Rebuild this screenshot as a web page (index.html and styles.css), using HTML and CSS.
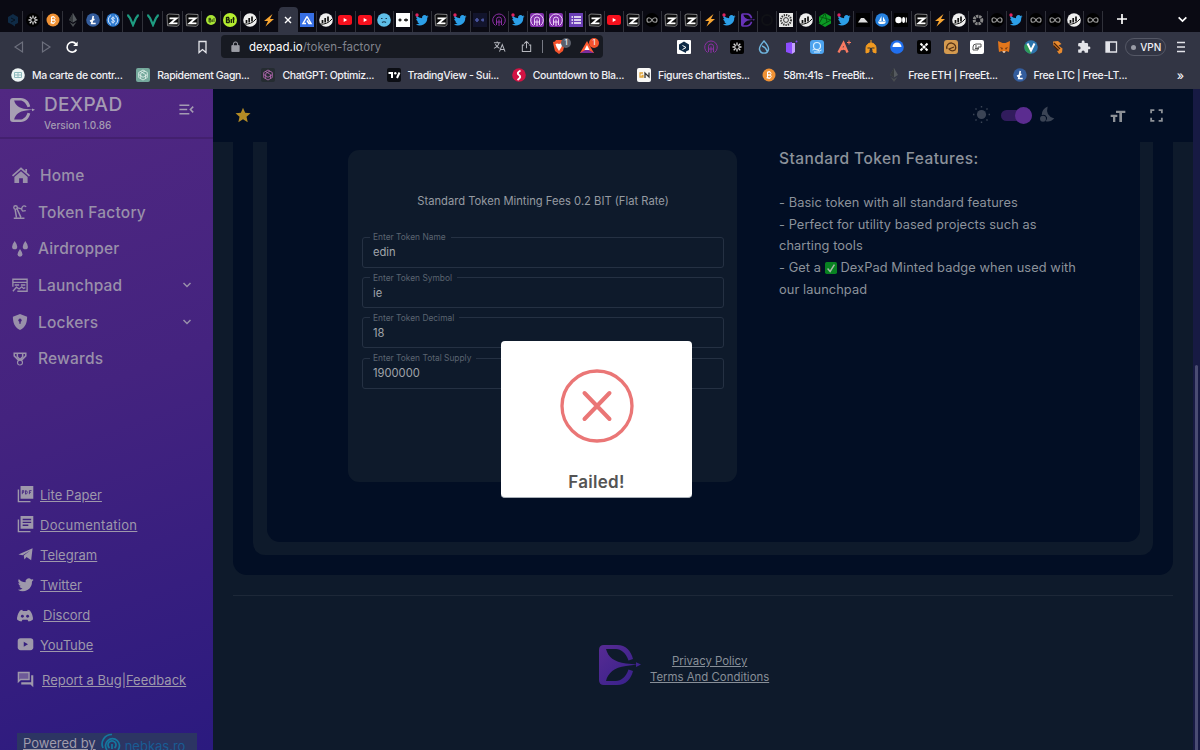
FILE: index.html
```html
<!DOCTYPE html>
<html lang="en">
<head>
  <meta charset="UTF-8">
  <meta name="viewport" content="width=device-width, initial-scale=1">
  <title>DEXPAD - Token Factory</title>
  <link rel="stylesheet" href="styles.css">
</head>
<body>

<!-- icon sprite -->
<svg class="sprite">
  <defs>
    <linearGradient id="g-logo" x1="0" y1="0" x2="1" y2="1">
      <stop offset="0" stop-color="#572b93"/><stop offset="1" stop-color="#35208a"/>
    </linearGradient>
  </defs>
  <symbol id="hex" viewBox="0 0 14 14"><path d="M7 1l5 3v6l-3 1.500v2l-3-2-4-2V4z" fill="#0f2b46"/><path d="M5 5l4 2-4 2" fill="none" stroke="#07121f"/></symbol>
  <symbol id="flake" viewBox="0 0 14 14"><circle cx="7" cy="7" r="7" fill="#000"/><path d="M7 2.500v3M7 8.500v3M2.500 7h3M8.500 7h3M3.700 3.700l2 2M8.300 8.300l2 2M3.700 10.300l2-2M8.300 5.700l2-2" stroke="#ddd" stroke-width="1.300"/></symbol>
  <symbol id="btc" viewBox="0 0 14 14"><circle cx="7" cy="7" r="6.500" fill="#f09235"/><path d="M5.500 4v6M5.500 4.200h2.200q1.500.1 1.300 1.400T7.500 7H5.500h2.300q1.600.2 1.400 1.500T7.700 9.800H4.500M6.200 3v1M7.700 3v1M6.200 10v1M7.700 10v1" fill="none" stroke="#fff"/></symbol>
  <symbol id="eth" viewBox="0 0 14 14"><path d="M7 0l4 7-4 2.500L3 7z" fill="#555a5e"/><path d="M7 0v9.500L3 7z" fill="#35393d"/><path d="M3.500 9L7 11l3.500-2L7 14z" fill="#484c50"/></symbol>
  <symbol id="ltc" viewBox="0 0 14 14"><circle cx="7" cy="7" r="6.800" fill="#345d9d"/><path d="M7.300 3L5.700 10.500h4M4 8.300l4.500-2" fill="none" stroke="#fff" stroke-width="1.600"/></symbol>
  <symbol id="usd" viewBox="0 0 14 14"><circle cx="7" cy="7" r="6.700" fill="#2f7bd0"/><path d="M5 2.500a5 5 0 0 0 0 9M9 2.500a5 5 0 0 1 0 9M8.800 5.500Q7 3.800 5.600 5.200 5.300 6.500 7 7t1.600 1.600Q7.500 10.300 5.200 8.700M7 3.500v7" fill="none" stroke="#d4e7ff"/></symbol>
  <symbol id="vee" viewBox="0 0 14 14"><path d="M2 1.500c0 2 1 2 2 3.500l3 7 3-7c1-1.500 2-1.500 2-3.500" fill="none" stroke="#1e9c81" stroke-width="2.200"/></symbol>
  <symbol id="zee" viewBox="0 0 14 14"><path d="M1 2l2-1 10 .5V12l-2 1.300-9.500-.6z" fill="#0c0c0d" stroke="#aaa" stroke-width=".7"/><path d="M3.500 5.300h7L4.500 10.300h7" fill="none" stroke="#fff" stroke-width="1.800"/></symbol>
  <symbol id="bitS" viewBox="0 0 14 14"><circle cx="7" cy="7" r="5" fill="#a9e534"/><path d="M5 5v4M5 5.300h1.500v1.500H5h2V9H5M8.300 6.300V9M10 5v4" fill="none" stroke="#263510" stroke-width=".8"/></symbol>
  <symbol id="bitL" viewBox="0 0 14 14"><circle cx="7" cy="7" r="7" fill="#b5ee2f"/><path d="M3.500 4v6M3.500 4.500h2q1 1.200 0 2.300h-2 2.500q1 1.500 0 2.700H3.500M8.300 6v4M10.500 4v6M9.500 6h2" fill="none" stroke="#17200a" stroke-width="1.300"/></symbol>
  <symbol id="mm" viewBox="0 0 14 14"><circle cx="7" cy="7" r="6.800" fill="#eee"/><path d="M3.500 10V7M6.200 9.500V5M9 8.500V3.500" stroke="#111" stroke-width="1.700"/><path d="M1 11q7 1 12-5" fill="none" stroke="#111"/></symbol>
  <symbol id="bolt" viewBox="0 0 14 14"><path d="M10.500 1L2 8h4l-2.500 5.500L12 6H8z" fill="#f7a531"/></symbol>
  <symbol id="tri" viewBox="0 0 14 14"><path d="M0 0h14v14H0z" fill="#376fe4"/><path d="M7 3.500L3 10.500h3M7 3.500l4 7H8.500M7 7.500l2 3" fill="none" stroke="#fff" stroke-width="1.500"/></symbol>
  <symbol id="yt" viewBox="0 0 14 14"><rect y="2" width="14" height="10" rx="2.500" fill="#f5101d"/><path d="M5.700 5v4l3.500-2z" fill="#fff"/></symbol>
  <symbol id="face" viewBox="0 0 14 14"><circle cx="7" cy="7" r="6.800" fill="#5fbfe8"/><path d="M4 5.500h1.500M8.500 5.500H10M5 9.500q2-1.500 4 0" stroke="#1a3b52" stroke-width="1.200" fill="none"/></symbol>
  <symbol id="dots" viewBox="0 0 14 14"><path d="M0 0h14v14H0z" fill="#fff"/><path d="M2.500 7h3M8 7h4M4 5.500v3M10 5.500v3" stroke="#111" stroke-width="1.300"/></symbol>
  <symbol id="dots2" viewBox="0 0 14 14"><path d="M0 0h14v14H0z" fill="#12142c"/><path d="M2 7h4M8 7h3M4 5v4M10 5.500v3" stroke="#4a55a0" stroke-width="1.700"/></symbol>
  <symbol id="bird" viewBox="0 0 24 24"><path fill="currentColor" d="M22.500 6c-.8.300-1.600.6-2.400.7.900-.5 1.500-1.300 1.800-2.300-.8.500-1.700.8-2.600 1a4.200 4.200 0 0 0-7.200 3.800A11.900 11.900 0 0 1 3.400 4.800a4.200 4.200 0 0 0 1.300 5.600c-.7 0-1.300-.2-1.900-.5 0 2 1.400 3.800 3.400 4.200-.6.200-1.300.2-1.900.1.500 1.700 2.100 2.900 3.900 2.900A8.400 8.400 0 0 1 2 18.800a11.900 11.900 0 0 0 18.400-10.600c.8-.6 1.500-1.300 2.100-2.200z"/></symbol>
  <symbol id="tw" viewBox="0 0 14 14"><svg x="-.5" y="-.5" width="15" height="15" viewBox="0 0 24 24" color="#2c9fe8"><use href="#bird"/></svg><circle cx="2" cy="2" r="1.700" fill="#e0245e"/></symbol>
  <symbol id="arch" viewBox="0 0 14 14"><path d="M3.500 12.500A6.300 6.300 0 1 1 10.500 12.500M4.500 12V6.500a2.500 2.500 0 0 1 5 0V12M7 6.500V13M4.500 9h5" fill="none" stroke="currentColor" stroke-width="1"/></symbol>
  <symbol id="list" viewBox="0 0 14 14"><path d="M0 0h14v14H0z" fill="#6a3fb5"/><path d="M2.500 4h1.500M5 4h7M2.500 7h1.500M5 7h7M2.500 10h1.500M5 10h7" stroke="#fff" stroke-width="1.500"/></symbol>
  <symbol id="inf" viewBox="0 0 14 14"><circle cx="7" cy="7" r="7" fill="#000"/><path d="M7 7C5.500 4 2 4 2 7S5.500 10 7 7s5-3 5 0S8.500 10 7 7z" fill="none" stroke="#999" stroke-width="1.200"/></symbol>
  <symbol id="ring" viewBox="0 0 14 14"><circle cx="7" cy="7" r="5" fill="none" stroke="#101116" stroke-width="2"/></symbol>
  <symbol id="mandala" viewBox="0 0 14 14"><path d="M0 0h14v14H0z" fill="#e8e8e8"/><circle cx="7" cy="7" r="5" fill="none" stroke="#333" stroke-width="2" stroke-dasharray="1.300 1"/><circle cx="7" cy="7" r="2.400" fill="none" stroke="#333"/></symbol>
  <symbol id="gear" viewBox="0 0 14 14"><circle cx="7" cy="7" r="3.800" fill="none" stroke="#888" stroke-width="3" stroke-dasharray="2.300 .8"/></symbol>
  <symbol id="cube" viewBox="0 0 14 14"><path d="M7 0l6 3.500v7L7 14l-6-3.500v-7z" fill="#0b9b24"/><path d="M1 3.500L13 7 4 12M1 10.500L7 0l2 9" fill="none" stroke="#04560f"/></symbol>
  <symbol id="hill" viewBox="0 0 14 14"><path d="M0 0h14v14H0z" fill="#000"/><path d="M2 9.500L5 5h3l4 4.500z" fill="#ddd"/></symbol>
  <symbol id="sea" viewBox="0 0 14 14"><circle cx="7" cy="7" r="6.800" fill="#2681df"/><path d="M3 8.500h8Q10.500 11 8 11H5Q3 10.500 3 8.500zM6.500 3v5H4zM8 3.500L10.500 8H8z" fill="#fff"/></symbol>
  <symbol id="med" viewBox="0 0 14 14"><path d="M0 0h14v14H0z" fill="#000"/><circle cx="4.500" cy="7" r="3.200" fill="#fff"/><ellipse cx="9.600" cy="7" rx="1.500" ry="3" fill="#fff"/><path d="M12.300 4.500v5" stroke="#fff"/></symbol>
  <symbol id="gpt" viewBox="0 0 14 14"><path d="M7 2l4.300 2.500v5L7 12 2.700 9.500v-5zM4.500 3.500L9.500 6.500v4M2.700 6.500L7 9.300l4.300-2.600M4.700 10.500v-5L9 3" fill="none" stroke="currentColor" stroke-width=".8"/></symbol>
  <symbol id="dex" viewBox="0 0 42 40"><path d="M5 0H18C27 0 32 6 34 14L29.500 15.500C27 8 22 4 17 4H7C9 12 15 17 27 18.500L38 19.500L27 21C15 22.500 9 28 7 36H17C22 36 27 32 29.500 24.500L34 26C32 34 27 40 18 40H5Q0 40 0 35V5Q0 0 5 0ZM37 17.300l5 2.300-5 2.400z"/></symbol>
  <symbol id="chev" viewBox="0 0 10 10"><path d="M1.500 3L5 6.500 8.500 3" fill="none" stroke="currentColor" stroke-width="1.500"/></symbol>
</svg>

<div class="browser">
  <div class="tabs">
    <div class="tab wide"><svg><use href="#hex"/></svg></div>
    <div class="tab wide"><svg><use href="#flake"/></svg></div>
    <div class="tab wide"><svg><use href="#btc"/></svg></div>
    <div class="tab wide"><svg><use href="#eth"/></svg></div>
    <div class="tab wide"><svg><use href="#ltc"/></svg></div>
    <div class="tab wide"><svg><use href="#usd"/></svg></div>
    <div class="tab wide"><svg><use href="#vee"/></svg></div>
    <div class="tab wide"><svg><use href="#vee"/></svg></div>
    <div class="tab wide"><svg><use href="#zee"/></svg></div>
    <div class="tab"><svg><use href="#zee"/></svg></div>
    <div class="tab"><svg><use href="#bitS"/></svg></div>
    <div class="tab"><svg><use href="#bitL"/></svg></div>
    <div class="tab"><svg><use href="#mm"/></svg></div>
    <div class="tab"><svg><use href="#bolt"/></svg></div>
    <div class="tab active"><svg viewBox="0 0 14 14"><path d="M4 4l6 6M10 4l-6 6" stroke="#fff" stroke-width="1.400"/></svg></div>
    <div class="tab"><svg><use href="#tri"/></svg></div>
    <div class="tab"><svg><use href="#mm"/></svg></div>
    <div class="tab"><svg><use href="#yt"/></svg></div>
    <div class="tab"><svg><use href="#yt"/></svg></div>
    <div class="tab"><svg><use href="#face"/></svg></div>
    <div class="tab"><svg><use href="#dots"/></svg></div>
    <div class="tab"><svg><use href="#tw"/></svg></div>
    <div class="tab"><svg><use href="#zee"/></svg></div>
    <div class="tab"><svg><use href="#tw"/></svg></div>
    <div class="tab"><svg><use href="#dots2"/></svg></div>
    <div class="tab"><svg class="arch"><use href="#arch"/></svg></div>
    <div class="tab"><svg><use href="#tw"/></svg></div>
    <div class="tab"><svg class="arch-fill"><use href="#arch"/></svg></div>
    <div class="tab"><svg class="arch-fill"><use href="#arch"/></svg></div>
    <div class="tab"><svg><use href="#list"/></svg></div>
    <div class="tab"><svg><use href="#zee"/></svg></div>
    <div class="tab"><svg><use href="#yt"/></svg></div>
    <div class="tab"><svg><use href="#zee"/></svg></div>
    <div class="tab"><svg><use href="#inf"/></svg></div>
    <div class="tab"><svg><use href="#zee"/></svg></div>
    <div class="tab"><svg><use href="#zee"/></svg></div>
    <div class="tab"><svg><use href="#bolt"/></svg></div>
    <div class="tab"><svg><use href="#tw"/></svg></div>
    <div class="tab"><svg class="dex-tab"><use href="#dex"/></svg></div>
    <div class="tab"><svg><use href="#ring"/></svg></div>
    <div class="tab"><svg><use href="#mandala"/></svg></div>
    <div class="tab"><svg><use href="#mm"/></svg></div>
    <div class="tab"><svg><use href="#cube"/></svg></div>
    <div class="tab"><svg><use href="#tw"/></svg></div>
    <div class="tab"><svg><use href="#hill"/></svg></div>
    <div class="tab"><svg><use href="#sea"/></svg></div>
    <div class="tab"><svg><use href="#med"/></svg></div>
    <div class="tab"><svg><use href="#zee"/></svg></div>
    <div class="tab"><svg><use href="#bolt"/></svg></div>
    <div class="tab"><svg><use href="#mm"/></svg></div>
    <div class="tab"><svg><use href="#gear"/></svg></div>
    <div class="tab"><svg><use href="#inf"/></svg></div>
    <div class="tab"><svg><use href="#tw"/></svg></div>
    <div class="tab"><svg><use href="#inf"/></svg></div>
    <div class="tab"><svg><use href="#inf"/></svg></div>
    <div class="tab"><svg><use href="#mm"/></svg></div>
    <div class="tab"><svg><use href="#inf"/></svg></div>
    <svg class="new-tab" viewBox="0 0 14 14"><path d="M7 2v10M2 7h10" stroke="#fff" stroke-width="1.700"/></svg>
    <svg class="tab-menu" viewBox="0 0 10 10"><path d="M1.500 3L5 6.500 8.500 3" fill="none" stroke="#fff" stroke-width="1.500"/></svg>
  </div>

  <div class="toolbar">
    <div class="nav-buttons">
      <svg viewBox="0 0 14 14"><path d="M10.500 2v10L3 7z" fill="none" stroke="#6d707d" stroke-width="1.200"/></svg>
      <svg viewBox="0 0 14 14"><path d="M3.500 2v10L11 7z" fill="none" stroke="#6d707d" stroke-width="1.200"/></svg>
      <svg viewBox="0 0 14 14"><path d="M11.500 9.500A5 5 0 1 1 11 4" fill="none" stroke="#fff" stroke-width="1.600"/><path d="M12.700 1.500v4.500H8.200z" fill="#fff"/></svg>
    </div>
    <svg class="mark" viewBox="0 0 14 14"><path d="M3.500 1.500h7v11L7 9.500l-3.500 3z" fill="none" stroke="#e4e5ea" stroke-width="1.300"/></svg>
    <div class="address">
      <svg class="lock" viewBox="0 0 12 12"><path d="M2 5h8v6.500H2zM3.700 5V3.300a2.300 2.300 0 0 1 4.600 0V5" fill="#9b9da5" stroke="#9b9da5"/><path d="M4.300 4.500V3.300a1.700 1.700 0 0 1 3.400 0v1.200z" fill="#171a22"/></svg>
      <span class="url">dexpad.io<i>/token-factory</i></span>
      <svg class="translate" viewBox="0 0 14 14"><path d="M1 3h7M4.500 1.500V3M6.500 3Q5.500 7 1 9M2.500 4.500Q4 7.500 7 9M7 12.500l3-7.500 3 7.500M8 10.300h4" fill="none" stroke="#b5b7be" stroke-width="1.100"/></svg>
      <svg class="share" viewBox="0 0 14 14"><path d="M4.500 5.500H2.500v7h9v-7h-2M7 9V1.500M4.500 4L7 1.500 9.500 4" fill="none" stroke="#b5b7be" stroke-width="1.100"/></svg>
      <span class="bar"></span>
      <span class="shield"><svg viewBox="0 0 14 14"><path d="M4 0h6l1 1.500L13 2l-.5 3L11 11l-4 3-4-3-1.500-6L1 2l2-.5z" fill="#f4532c"/><path d="M3.500 4l2-.5L7 4l1.500-.5 2 .5-1 3L7 11 4.500 7z" fill="#fff"/></svg><b class="grey">1</b></span>
      <span class="shield"><svg viewBox="0 0 14 14"><path d="M7 1l7 12H0z" fill="#ff5a30"/><path d="M0 13l7-4 7 4z" fill="#7a2c9b"/><path d="M7 5l2.500 5h-5z" fill="#fff"/></svg><b>1</b></span>
    </div>
    <div class="extensions">
      <span><svg viewBox="0 0 14 14"><rect width="14" height="14" rx="1" fill="#fff"/><path d="M7 1.500l5 3v5.500l-3 1.500v1.500l-2-1-5-2.500V4.500z" fill="#0f2b46"/><path d="M5.500 5.500l3.500 2-3.500 2" fill="none" stroke="#fff"/></svg></span>
      <span><svg class="arch"><use href="#arch"/></svg></span>
      <span><svg class="black"><use href="#flake"/></svg></span>
      <span><svg viewBox="0 0 14 14"><path d="M7 1q-5 5.500-4.500 8.500a4.600 4.600 0 0 0 9 0Q12 6.500 7 1zM5 6q4 1.500 5 5" fill="none" stroke="#6fb4dd" stroke-width="1.400"/></svg></span>
      <span><svg viewBox="0 0 14 14"><path d="M2 3l6-1v12l-6-2z" fill="#8c4dff"/><path d="M8 3h3v9l-3 2z" fill="#c5a0ff"/><circle cx="12.500" cy="1.500" r="1" fill="#7e46f2"/></svg></span>
      <span><svg viewBox="0 0 14 14"><rect width="14" height="14" rx="3" fill="#4da3ee"/><circle cx="7" cy="6" r="3.500" fill="none" stroke="#d9efff" stroke-width="1.200"/><path d="M2.500 10q2-1.500 4.500 0t4.500 0M4 12h6" fill="none" stroke="#d9efff"/></svg></span>
      <span><svg viewBox="0 0 14 14"><path d="M1.500 12.500L6.500 3l4 9.500M4 9.500q3-2 4.500 0" fill="none" stroke="#fa7a61" stroke-width="2.400"/><path d="M12 .5v4M10 2.500h4" stroke="#fa7a61"/></svg></span>
      <span><svg viewBox="0 0 14 14"><path d="M7 0v3M2 13V8a5 5 0 0 1 10 0v5L9 12V9H5v3z" fill="#f19a20" stroke="#f19a20"/><path d="M3.500 8h3v2M10.500 8h-3v2" stroke="#333" fill="none"/></svg></span>
      <span><svg viewBox="0 0 14 14"><circle cx="7" cy="7" r="6.800" fill="#216fee"/><path d="M2.500 7a4.500 4.500 0 0 1 9 0z" fill="#fff"/></svg></span>
      <span><svg viewBox="0 0 14 14"><rect width="14" height="14" rx="2" fill="#000"/><path d="M3.500 3.500l2 2M10.500 3.500l-2 2M3.500 10.500l2-2M10.500 10.500l-2-2" stroke="#fff" stroke-width="2"/><path d="M5.500 5.500h3v3h-3z" fill="#fff"/></svg></span>
      <span><svg viewBox="0 0 14 14"><rect width="14" height="14" rx="3" fill="#d49a4f"/><path d="M3 9a4.500 4.500 0 1 1 8 1q-4 2-6-1l5-2" fill="none" stroke="#5a3516" stroke-width="1.300"/></svg></span>
      <span><svg viewBox="0 0 14 14"><rect width="14" height="14" rx="2" fill="#fff"/><path d="M3 10V7q0-3 3-3h5v3H8v3H3M5 8.500h4M6 5v4" fill="none" stroke="#555"/></svg></span>
      <span><svg viewBox="0 0 14 14"><path d="M1 1l4.500 2h3L13 1l-.5 7-.5 4-3-1-1 1.500H6L5 11l-3 1-.5-4z" fill="#e2761b"/><path d="M3 7l3 1-1 2M11 7L8 8l1 2" fill="#763d16"/><path d="M5.500 11h3l-1 2h-1z" fill="#d7c1b3"/></svg></span>
      <span><svg viewBox="0 0 14 14"><circle cx="7" cy="7" r="6.800" fill="#2c75ad"/><path d="M1 4a7 7 0 0 0 6 9.800V7z" fill="#2f9a57"/><path d="M3.500 3.500L7 10.500l3.500-7" fill="none" stroke="#fff" stroke-width="2"/></svg></span>
      <span><svg viewBox="0 0 14 14"><path d="M3 1.500L8 1l3.500 3-3 1.500 4 3-.5 4-3 1.500-2-3 2-1-5.500-4z" fill="#e88a2f"/><path d="M4 3l6 6M3.500 5.500l5 5" stroke="#4d2206" stroke-width="1.200"/></svg></span>
      <span><svg viewBox="0 0 24 24"><path d="M20.500 11H19V7a2 2 0 0 0-2-2h-4V3.500a2.500 2.500 0 0 0-5 0V5H4a2 2 0 0 0-2 2v3.800h1.500a2.700 2.700 0 0 1 0 5.400H2V20a2 2 0 0 0 2 2h3.800v-1.500a2.700 2.700 0 0 1 5.400 0V22H17a2 2 0 0 0 2-2v-4h1.500a2.500 2.500 0 0 0 0-5z" fill="#e3e4e9"/></svg></span>
      <span><svg viewBox="0 0 14 14"><path d="M2 2h10.500v10H2z" fill="none" stroke="#e3e4e9" stroke-width="1.300"/><path d="M2 2h4v10H2z" fill="#e3e4e9"/></svg></span>
    </div>
    <div class="vpn">VPN</div>
    <svg class="burger" viewBox="0 0 10 12"><path d="M1 1.500h8M1 6h8M1 10.500h8" stroke="#e3e4e9" stroke-width="1.400"/></svg>
  </div>

  <div class="bookmarks">
    <div><svg viewBox="0 0 14 14"><circle cx="7" cy="7" r="6.800" fill="#eef5f5"/><path d="M3.500 4.500h7v5h-7zM3.500 7h7M7 4.500v5" fill="none" stroke="#8db9bd"/></svg>Ma carte de contr...</div>
    <div><svg class="gpt-green"><use href="#gpt"/></svg>Rapidement Gagn...</div>
    <div><svg class="gpt-dark"><use href="#gpt"/></svg>ChatGPT: Optimiz...</div>
    <div><svg viewBox="0 0 14 14"><rect width="14" height="14" rx="2" fill="#0c0e14"/><path d="M1.500 5h4.500M5 5v5M12.500 4.500L10 10" fill="none" stroke="#fff" stroke-width="2"/><circle cx="8.300" cy="5.200" r="1.200" fill="#fff"/></svg>TradingView - Sui...</div>
    <div><svg viewBox="0 0 14 14"><circle cx="7" cy="7" r="6.800" fill="#d31343"/><path d="M8.500 2.500Q4 5 7 7t-1.500 5" fill="none" stroke="#fff" stroke-width="2"/></svg>Countdown to Bla...</div>
    <div><svg viewBox="0 0 14 14"><rect width="14" height="14" rx="2" fill="#f8f8f6"/><path d="M6 5H3v4h3V7.500H4.500" fill="none" stroke="#e0a438" stroke-width="1.300"/><path d="M8 10V5l4 4V4.500" fill="none" stroke="#333" stroke-width="1.300"/></svg>Figures chartistes...</div>
    <div><svg><use href="#btc"/></svg>58m:41s - FreeBit...</div>
    <div><svg><use href="#eth"/></svg>Free ETH | FreeEt...</div>
    <div><svg><use href="#ltc"/></svg>Free LTC | Free-LT...</div>
    <span class="more">»</span>
  </div>
</div>

<div class="app">
  <aside class="sidebar">
    <div class="brand">
      <svg class="brand-logo" viewBox="0 0 42 40"><use href="#dex"/></svg>
      <div class="brand-text">
        <h1>DEXPAD</h1>
        <p>Version 1.0.86</p>
      </div>
      <svg class="collapse" viewBox="0 0 24 24"><path d="M2 6h14M2 12h11M2 18h14M21.500 8l-4 4 4 4" fill="none" stroke="currentColor" stroke-width="2.200"/></svg>
    </div>

    <nav class="menu">
      <a class="home"><svg viewBox="0 0 20 18"><path d="M10 4.500L3 10.500V17h5v-5h4v5h5v-6.500z" fill="currentColor"/><path d="M1 9.500l9-8 9 8M15.500 2v3.500" fill="none" stroke="currentColor" stroke-width="1.800"/></svg>Home</a>
      <a><svg viewBox="0 0 20 18"><path d="M3 16h12M6 15L4.500 6M11 15L6.500 5" fill="none" stroke="currentColor" stroke-width="1.700"/><circle cx="5" cy="4" r="2" fill="none" stroke="currentColor" stroke-width="1.500"/><path d="M6.500 4l5 1.500M17 3q-3-2-4.500.5t.5 4.500l3.500-.5" fill="none" stroke="currentColor" stroke-width="1.400"/></svg>Token Factory</a>
      <a><svg viewBox="0 0 20 18"><path d="M4 0q3 4 2.900 6.500a2.900 2.900 0 0 1-5.800 0Q1 4 4 0zM16 0q3 4 2.900 6.500a2.900 2.900 0 0 1-5.800 0Q13 4 16 0zM10 9q2.800 4 2.800 6a2.800 2.800 0 0 1-5.600 0Q7.200 13 10 9z" fill="currentColor"/></svg>Airdropper</a>
      <a><svg viewBox="0 0 20 18"><path d="M2 11V2.500h16V16H7M2 6h16M4 9h5M11 9h5M2 16l4-4.500 3 2 3-2.500 2 2 2-1" fill="none" stroke="currentColor" stroke-width="1.500"/></svg>Launchpad<svg class="chev"><use href="#chev"/></svg></a>
      <a><svg viewBox="0 0 20 18"><path d="M10 0l8 3c0 7-2 12-8 15C4 15 2 10 2 3z" fill="currentColor"/><circle cx="10" cy="7" r="1.800" fill="#48247f"/><path d="M10 7v4" stroke="#48247f" stroke-width="1.600"/></svg>Lockers<svg class="chev"><use href="#chev"/></svg></a>
      <a><svg viewBox="0 0 20 18"><path d="M3.500 2.500h13v3l-4 4h-5l-4-4zM7 2.500v4l3 3 3-3v-4" fill="none" stroke="currentColor" stroke-width="1.700"/><circle cx="10" cy="13" r="2.800" fill="none" stroke="currentColor" stroke-width="1.300"/></svg>Rewards</a>
    </nav>

    <div class="links">
      <a><svg viewBox="0 0 24 24"><path d="M2 5v17h17" fill="none" stroke="currentColor" stroke-width="2"/><path d="M5 0h18v18H5z" fill="currentColor"/><path d="M7.500 11.500v-5h2v2.500h-2M12 6.500v5q2.500 0 2.500-2.500t-2.500-2.500M17.500 11.500v-5h3M17.500 9h2" fill="none" stroke="#42237f" stroke-width="1.200"/></svg><span>Lite Paper</span></a>
      <a><svg viewBox="0 0 24 24"><path d="M2 5v17h17" fill="none" stroke="currentColor" stroke-width="2"/><path d="M5 0h18v18H5z" fill="currentColor"/><path d="M8 5h12M8 9h12M8 13h8" stroke="#40227f" stroke-width="2"/></svg><span class="docs">Documentation</span></a>
      <a><svg viewBox="0 0 24 24"><path d="M2 12L22 3l-2 17-6.500-4.500-3 3.500-1-5.500L19 6 8 13z" fill="currentColor"/></svg><span>Telegram</span></a>
      <a><svg viewBox="1 1 22 22"><use href="#bird" width="24" height="24"/></svg><span>Twitter</span></a>
      <a class="discord"><svg viewBox="0 0 24 24"><path d="M8 4L5 5Q0 12 1 18q3 2.500 6 2.500L8.500 18h7l1.500 2.500q3 0 6-2.500 1-6-4-13l-3-1-1 1.500H9z" fill="currentColor"/><circle cx="8.300" cy="13" r="2" fill="#38207f"/><circle cx="15.700" cy="13" r="2" fill="#38207f"/></svg><span>Discord</span></a>
      <a><svg viewBox="0 0 24 24"><rect x="1" y="3" width="22" height="17" rx="4" fill="currentColor"/><path d="M9.500 8v7l6-3.500z" fill="#361f7f"/></svg><span>YouTube</span></a>
      <a class="report"><svg viewBox="0 0 24 24"><path d="M2 2h15v10H5l-3 3z" fill="#6d5998" stroke="currentColor" stroke-width="2"/><path d="M20 6h3v17l-4-4H6v-3h14z" fill="currentColor"/></svg><span>Report a Bug|Feedback</span></a>
    </div>

    <div class="powered">
      <span>Powered by</span>
      <svg viewBox="0 0 22 22"><path d="M2 15A9.500 9.500 0 0 1 11 1.500M6 17a7 7 0 1 1 11 0M8.500 15a4 4 0 1 1 5 0M11 11v5" fill="none" stroke="#1478a0" stroke-width="1.700"/></svg>
      <b>nebkas.ro</b>
    </div>
  </aside>

  <main class="main">
    <header class="topbar">
      <svg class="star" viewBox="0 0 24 24"><path d="M12 1l3.300 7.500 8 .8-6 5.400 1.800 8L12 18.500l-7 4.200 1.800-8-6-5.400 8-.8z" fill="currentColor"/></svg>
      <svg class="sun" viewBox="0 0 24 24"><circle cx="12" cy="12" r="6.500" fill="currentColor"/><path d="M12 0v2M12 22v2M0 12h2M22 12h2M3.500 3.500L5 5M19 19l1.500 1.500M3.500 20.500L5 19M19 5l1.500-1.500" stroke="currentColor" stroke-width="2"/></svg>
      <span class="switch"></span>
      <svg class="moon" viewBox="0 0 24 24"><path d="M13 0Q9 14 23 18q-6 6-13 4 3-3 2-6-3-5-8-3Q4 4 13 0z" fill="currentColor"/><circle cx="6" cy="18.500" r="4.500" fill="currentColor"/></svg>
      <svg class="text-size" viewBox="0 0 24 24"><path d="M9 4h14v3.500h-5V21h-4V7.500H9zM1 10h10v3.500H8V21H4.500v-7.500H1z" fill="currentColor"/></svg>
      <svg class="full" viewBox="0 0 14 14"><path d="M2 5V2h3M9 2h3v3M12 9v3H9M5 12H2V9" fill="none" stroke="currentColor" stroke-width="1.700"/></svg>
    </header>

    <div class="panel">
      <div class="panel-mid">
        <div class="panel-in">
          <form class="mint">
            <p>Standard Token Minting Fees 0.2 BIT (Flat Rate)</p>
            <fieldset><legend>Enter Token Name</legend><input type="text" value="edin"></fieldset>
            <fieldset><legend>Enter Token Symbol</legend><input type="text" value="ie"></fieldset>
            <fieldset><legend>Enter Token Decimal</legend><input type="text" value="18"></fieldset>
            <fieldset><legend>Enter Token Total Supply</legend><input type="text" value="1900000"></fieldset>
          </form>
          <div class="features">
            <h2>Standard Token Features:</h2>
            <p>- Basic token with all standard features<br>
            - Perfect for utility based projects such as<br>
            charting tools<br>
            - Get a <svg viewBox="0 0 14 14"><rect width="14" height="14" rx="2" fill="#088221"/><path d="M3 7.500l3 3.500 5-8" fill="none" stroke="#a7b8a9" stroke-width="1.700"/></svg> DexPad Minted badge when used with<br>
            our launchpad</p>
          </div>
        </div>
      </div>
    </div>

    <footer class="footer">
      <svg viewBox="0 0 42 40" fill="url(#g-logo)"><use href="#dex"/></svg>
      <div>
        <a>Privacy Policy</a>
        <a>Terms And Conditions</a>
      </div>
    </footer>
  </main>
  <div class="scroll"><span></span></div>
</div>

<div class="modal">
  <svg viewBox="0 0 74 74"><circle cx="37" cy="37" r="35" fill="none" stroke="#ea7676" stroke-width="3.300"/><path d="M24.500 24L49.500 50M49.500 24L24.500 50" stroke="#ea7676" stroke-width="4" stroke-linecap="round"/></svg>
  <h3>Failed!</h3>
</div>

</body>
</html>
```

FILE: styles.css
```css
* {
  box-sizing: border-box;
}
body {
  margin: 0;
  width: 1200px;
  height: 750px;
  overflow: hidden;
  background: #0e1a2b;
  font-family: Inter, "Noto Sans", sans-serif;
}
h1, h2, h3, p {
  margin: 0;
}
svg {
  flex: none;
}
.sprite {
  position: absolute;
  width: 0;
  height: 0;
}

/* browser */
.browser {
  height: 89px;
  background: #323544;
  color: #f0f0f4;
}
.tabs {
  display: flex;
  height: 32px;
  padding: 7px 12px 0 3px;
  background: #0a0a13;
}
.tab {
  width: 19.18px;
  flex: none;
  display: flex;
  align-items: center;
  justify-content: center;
  border-right: 1px solid #24252e;
  border-image: linear-gradient(transparent 20%, #30313a 20%) 1;
}
.tab.wide {
  width: 20px;
}
.tab svg {
  width: 14px;
  height: 14px;
}
.tab.active {
  background: #323544;
  border: 0;
  border-radius: 4px 4px 0 0;
}
.arch {
  color: #8b2fa3;
}
.tab .arch-fill {
  color: #ecd3f7;
  background: #8330ad;
  border-radius: 2px;
}
.dex-tab {
  fill: #6733b8;
}
.new-tab {
  width: 14px;
  height: 14px;
  margin: 5px 0 0 12px;
}
.tab-menu {
  width: 11px;
  height: 11px;
  margin: 7px 0 0 auto;
}
.toolbar {
  display: flex;
  align-items: center;
  height: 29px;
}
.nav-buttons {
  display: flex;
  gap: 12.5px;
  width: 195px;
  padding-left: 12px;
}
.nav-buttons svg {
  width: 14px;
  height: 14px;
}
.mark {
  width: 15px;
  height: 14px;
}
.address {
  display: flex;
  align-items: center;
  width: 382px;
  height: 23px;
  margin-left: 11px;
  padding-left: 9px;
  background: #171a22;
  border-radius: 4px;
}
.lock {
  width: 11px;
  height: 11px;
}
.url {
  flex: none;
  width: 252px;
  padding-left: 8px;
  font-size: 11.5px;
  letter-spacing: 0.03px;
  color: #fff;
}
.url i {
  font-style: normal;
  color: #82858e;
}
.translate {
  width: 13px;
  height: 13px;
}
.share {
  width: 13px;
  height: 13px;
  margin-left: 14px;
}
.bar {
  flex: none;
  width: 1px;
  height: 13px;
  margin: 0 9px 0 9px;
  background: #777a84;
}
.shield {
  position: relative;
  flex: none;
  width: 28px;
  height: 14px;
}
.shield svg {
  display: block;
  width: 14px;
  height: 14px;
}
.shield b {
  position: absolute;
  left: 9px;
  top: -2px;
  width: 10px;
  height: 10px;
  border-radius: 5px;
  background: #f4532c;
  font-size: 7.5px;
  font-weight: 500;
  line-height: 10px;
  text-align: center;
}
.shield .grey {
  background: #5c606b;
}
.extensions {
  display: flex;
  margin-left: 67.5px;
}
.extensions span {
  display: flex;
  justify-content: center;
  width: 26.7px;
}
.extensions svg {
  width: 14px;
  height: 14px;
}
.extensions .black {
  background: #000;
  border-radius: 2px;
}
.vpn {
  width: 41px;
  height: 18px;
  margin-left: 1px;
  border: 1px solid #555866;
  border-radius: 9px;
  font-size: 10px;
  font-weight: 500;
  line-height: 16px;
  padding-left: 5px;
  white-space: nowrap;
}
.vpn::before {
  content: "";
  display: inline-block;
  width: 5px;
  height: 5px;
  margin-right: 4px;
  border-radius: 50%;
  background: #9a9ca6;
  vertical-align: 1px;
}
.burger {
  width: 10px;
  height: 12px;
  margin-left: 10px;
}
.bookmarks {
  display: flex;
  align-items: center;
  height: 28px;
  padding-left: 11px;
  font-size: 10.5px;
  font-weight: 500;
}
.bookmarks div {
  display: flex;
  align-items: center;
  gap: 7px;
  width: 125.2px;
  white-space: nowrap;
  letter-spacing: -0.37px;
}
.bookmarks svg {
  width: 14px;
  height: 14px;
}
.gpt-green {
  background: #75a99c;
  color: #e4f2ee;
  border-radius: 2px;
}
.gpt-dark {
  background: #252c31;
  color: #c06dbb;
  border-radius: 2px;
}
.more {
  margin-left: 39px;
  font-size: 12px;
}

/* page */
.app {
  display: flex;
  height: 661px;
}
.sidebar {
  width: 213px;
  flex: none;
  overflow: hidden;
  background: linear-gradient(160deg, #512882 0%, #44237f 45%, #2b1a7f 100%);
  color: #9990aa;
}
.brand {
  display: flex;
  height: 50px;
  padding: 9px 0 0 10px;
  border-bottom: 2px solid #43206f;
  color: #a49bb2;
}
.brand-logo {
  width: 25px;
  height: 24px;
  fill: #a79fb3;
}
.brand-text {
  width: 143px;
  padding-left: 9px;
}
.brand h1 {
  margin-top: -4px;
  font-size: 19px;
  font-weight: 500;
  line-height: 22px;
  letter-spacing: 0.35px;
}
.brand p {
  margin-top: 3px;
  font-size: 10px;
  font-weight: 500;
  line-height: 13px;
}
.collapse {
  width: 17px;
  height: 17px;
  margin-top: 3px;
}
.menu {
  padding: 18px 0 0 11px;
}
.menu a {
  display: flex;
  align-items: center;
  height: 36.7px;
  font-size: 15.5px;
  font-weight: 500;
  letter-spacing: 0.2px;
}
.menu svg {
  width: 18px;
  height: 16px;
  margin-right: 9px;
}
.menu .home svg {
  width: 20px;
  height: 17px;
}
.menu .chev {
  width: 10px;
  height: 10px;
  margin: 0 21px 0 auto;
}
.links {
  padding: 103px 0 0 17px;
  color: #9e98ab;
}
.links a {
  display: flex;
  align-items: center;
  height: 30px;
  font-size: 13px;
}
.links svg {
  width: 17px;
  height: 17px;
  margin: -2px 6px 0 0;
}
.links span {
  text-decoration: underline;
}
.links .docs {
  letter-spacing: 0.3px;
}
.links .discord svg {
  margin: 0 9px 0 -1px;
  width: 18px;
}
.links .report {
  height: 40px;
}
.links .report svg {
  margin-right: 8px;
}
.powered {
  display: flex;
  width: 180px;
  height: 24px;
  margin: 33px 0 0 17px;
  padding-left: 6px;
  background: #2c3563;
  font-size: 13px;
  line-height: 21px;
}
.powered span {
  text-decoration: underline;
  color: #a09cab;
}
.powered svg {
  width: 22px;
  height: 22px;
  margin: 0 2px 0 5px;
}
.powered b {
  font-weight: 400;
  line-height: 27px;
  color: #195c94;
}

.main {
  width: 980px;
  flex: none;
}
.topbar {
  display: flex;
  align-items: center;
  height: 53px;
  padding-left: 22px;
  background: #020e24;
  color: #8d9197;
}
.star {
  width: 16px;
  height: 16px;
  margin-top: -2px;
  color: #b38b25;
}
.sun {
  width: 17px;
  height: 17px;
  margin-left: 722px;
  margin-top: -2px;
  color: #3b4455;
}
.switch {
  display: flex;
  justify-content: flex-end;
  align-items: center;
  width: 31px;
  height: 11px;
  margin-left: 11px;
  border-radius: 6px;
  background: #311c5d;
}
.switch::after {
  content: "";
  width: 17px;
  height: 17px;
  border-radius: 50%;
  background: #5b2c90;
}
.moon {
  width: 16px;
  height: 17px;
  margin-left: 7px;
  margin-top: -2px;
  color: #3b4455;
}
.text-size {
  width: 16px;
  height: 16px;
  margin-left: 55px;
}
.full {
  width: 15px;
  height: 15px;
  margin-left: 23px;
}
.panel {
  width: 940px;
  height: 433px;
  margin-left: 20px;
  padding: 0 20px;
  background: #020e24;
  border-radius: 0 0 14px 14px;
}
.panel-mid {
  height: 413px;
  padding: 0 13px 0 14px;
  background: #0e1a2b;
  border-radius: 0 0 12px 12px;
}
.panel-in {
  display: flex;
  height: 400px;
  padding: 8px 0 0 81px;
  background: #020e24;
  border-radius: 0 0 13px 13px;
}
.mint {
  width: 389px;
  height: 332px;
  padding: 43px 13px 0 14px;
  background: #0e1a2b;
  border-radius: 11px;
  color: #969ba2;
}
.mint p {
  margin-bottom: 22.3px;
  font-size: 11.2px;
  line-height: 17px;
  text-align: center;
}
.mint fieldset {
  height: 35.5px;
  margin: 0 0 4.8px;
  padding: 0;
  border: 1px solid #253143;
  border-radius: 3px;
}
.mint legend {
  margin-left: 7px;
  padding: 0 5px 0 3px;
  font-size: 8.4px;
  line-height: 10px;
  color: #5b6470;
}
.mint input {
  display: block;
  width: 340px;
  height: 20px;
  padding: 0 0 0 10px;
  border: 0;
  outline: 0;
  background: none;
  font: 11.2px Inter, "Noto Sans", sans-serif;
  color: #a0a4aa;
}
.features {
  padding-left: 42px;
  color: #8c929b;
}
.features h2 {
  font-size: 15.5px;
  font-weight: 500;
  line-height: 18px;
  letter-spacing: 0.42px;
}
.features p {
  padding-top: 24px;
  font-size: 12.8px;
  line-height: 21.7px;
  letter-spacing: 0.09px;
  white-space: nowrap;
}
.features svg {
  width: 12px;
  height: 12px;
  vertical-align: -2px;
}
.footer {
  display: flex;
  width: 940px;
  margin: 20px 0 0 20px;
  padding: 49px 0 0 366px;
  border-top: 1px solid #1d2838;
}
.footer svg {
  width: 42px;
  height: 40px;
}
.footer div {
  display: flex;
  flex-direction: column;
  align-items: center;
  padding: 9px 0 0 9px;
}
.footer a {
  font-size: 11.4px;
  line-height: 15.5px;
  color: #888f98;
  text-decoration: underline;
}
.scroll {
  width: 7px;
  padding: 276px 2px 0;
  background: #171a43;
}
.scroll span {
  display: block;
  height: 385px;
  border-radius: 2px 2px 0 0;
  background: #4a4c72;
}

/* failed dialog lies over the page */
.modal {
  position: absolute;
  left: 501px;
  top: 341px;
  width: 191px;
  height: 157px;
  padding-top: 28px;
  border-radius: 4px;
  border-bottom: 1px solid #a9b0b8;
  background: #fff;
  text-align: center;
}
.modal svg {
  display: block;
  width: 74px;
  height: 74px;
  margin: 0 auto;
}
.modal h3 {
  margin-top: 28px;
  font-size: 17px;
  font-weight: 600;
  line-height: 22px;
  letter-spacing: 0.3px;
  color: #545454;
}
```
